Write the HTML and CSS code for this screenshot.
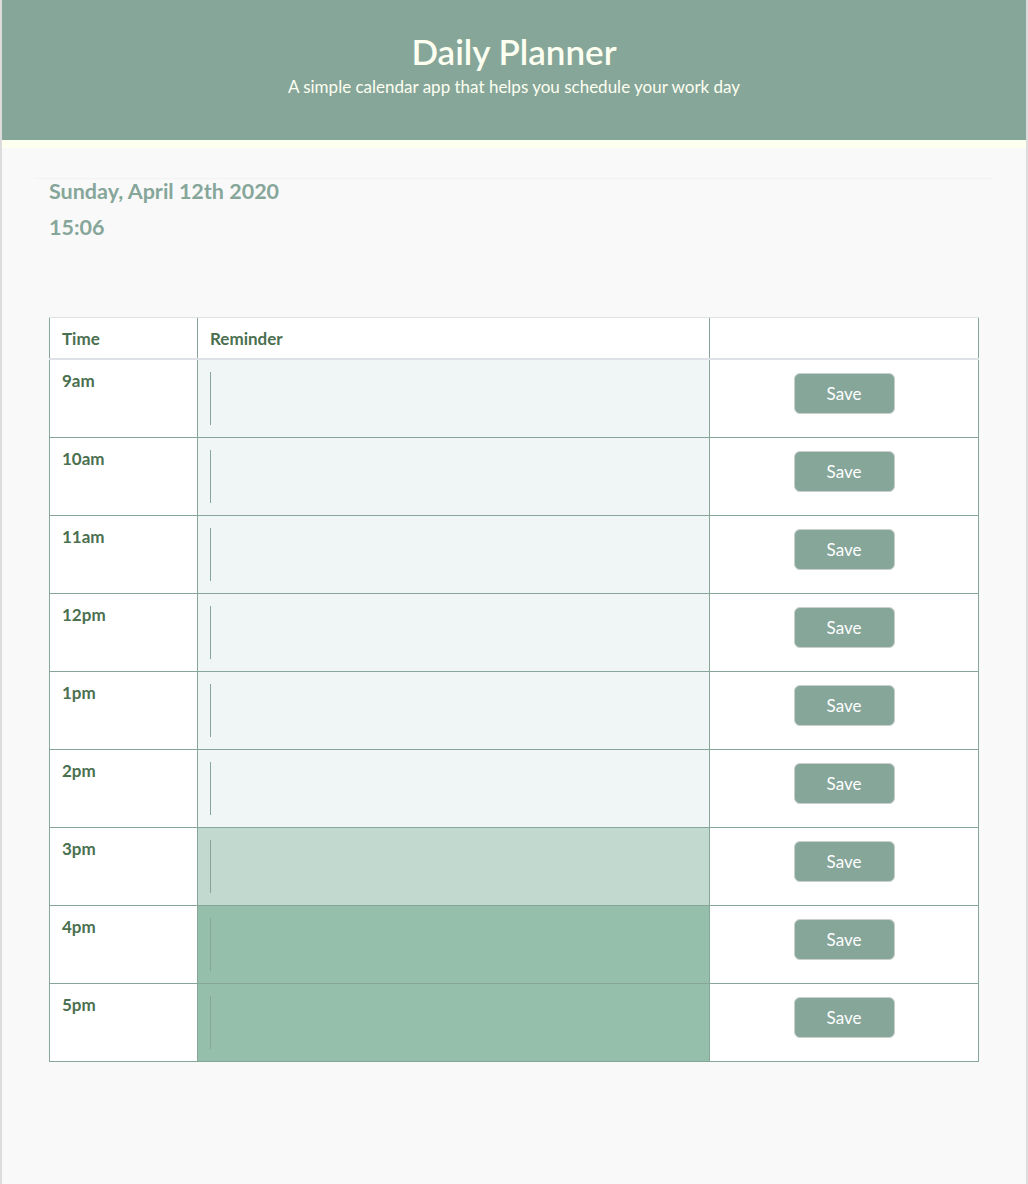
FILE: index.html
```html
<!DOCTYPE html>
<html lang="en">
<head>
<meta charset="utf-8">
<title>Daily Planner</title>
<link rel="stylesheet" href="styles.css">
</head>
<body>
<div class="page">
  <header class="jumbotron">
    <h1 class="title">Daily Planner</h1>
    <p class="lead">A simple calendar app that helps you schedule your work day</p>
  </header>
  <main class="container">
    <div class="today">
      <p class="date">Sunday, April 12th 2020</p>
      <p class="clock">15:06</p>
    </div>
    <table class="planner">
      <thead>
        <tr><th class="col-time">Time</th><th class="col-reminder">Reminder</th><th class="col-save"></th></tr>
      </thead>
      <tbody>
        <tr><td class="hour">9am</td><td class="slot past"><div class="note"></div></td><td class="action"><button class="save">Save</button></td></tr>
        <tr><td class="hour">10am</td><td class="slot past"><div class="note"></div></td><td class="action"><button class="save">Save</button></td></tr>
        <tr><td class="hour">11am</td><td class="slot past"><div class="note"></div></td><td class="action"><button class="save">Save</button></td></tr>
        <tr><td class="hour">12pm</td><td class="slot past"><div class="note"></div></td><td class="action"><button class="save">Save</button></td></tr>
        <tr><td class="hour">1pm</td><td class="slot past"><div class="note"></div></td><td class="action"><button class="save">Save</button></td></tr>
        <tr><td class="hour">2pm</td><td class="slot past"><div class="note"></div></td><td class="action"><button class="save">Save</button></td></tr>
        <tr><td class="hour">3pm</td><td class="slot present"><div class="note"></div></td><td class="action"><button class="save">Save</button></td></tr>
        <tr><td class="hour">4pm</td><td class="slot future"><div class="note"></div></td><td class="action"><button class="save">Save</button></td></tr>
        <tr><td class="hour">5pm</td><td class="slot future"><div class="note"></div></td><td class="action"><button class="save">Save</button></td></tr>
      </tbody>
    </table>
  </main>
</div>
</body>
</html>
```
FILE: styles.css
```css
html, body {
  margin: 0;
  padding: 0;
}
body {
  background: #f9f9f9;
  font-family: "Lato", "Open Sans", sans-serif;
  font-size: 17px;
  line-height: 1.5;
  color: #212529;
}
.page {
  min-height: 1184px;
  border-left: 2px solid #dcdcdc;
  border-right: 2px solid #dcdcdc;
  box-sizing: border-box;
}
.jumbotron {
  background: #86a69a;
  color: #fdfff0;
  text-align: center;
  box-sizing: content-box;
  height: 111px;
  padding-top: 29px;
  border-bottom: 8px solid #fdffef;
}
.title {
  margin: 0;
  font-size: 35px;
  font-weight: 600;
  line-height: 44px;
}
.lead {
  margin: 4px 0 0;
  font-size: 17px;
  line-height: 20px;
}
.container {
  width: 959px;
  margin: 30px 0 0 32px;
}
.today {
  border-top: 1px solid #f2f2f2;
  padding: 0 15px;
}
.date, .clock {
  margin: 0;
  color: #86a69a;
  font-weight: 700;
  font-size: 21.5px;
  line-height: 24px;
}
.clock {
  margin-top: 12px;
}
.planner {
  margin: 78px 15px 0;
  width: 930px;
  border-collapse: collapse;
  background: #fff;
  border-left: 1px solid #86a69a;
  border-right: 1px solid #86a69a;
  table-layout: fixed;
}
.planner th {
  text-align: left;
  color: #4b7050;
  font-weight: 700;
  padding: 8px 12px 6px;
  border-top: 1px solid #dee2e6;
  border-bottom: 2px solid #dee2e6;
  border-left: 1px solid #86a69a;
  height: 23px;
}
.col-time { width: 123px; }
.col-reminder { width: 487px; }
.planner td {
  border: 1px solid #86a69a;
  vertical-align: top;
  padding: 0;
}
.hour {
  color: #4b7050;
  font-weight: 700;
  padding: 8px 12px 0 !important;
}
.slot {
  padding: 12px !important;
}
.note {
  height: 53px;
  border-left: 1px solid #86a69a;
}
.past { background: #f0f6f5; }
.present { background: #c2d9cf; }
.future { background: #96bfab; }
.action {
  text-align: center;
}
.save {
  margin-top: 13px;
  width: 101px;
  height: 41px;
  background: #86a69a;
  color: #fff;
  border: 1px solid #c8cfcc;
  border-radius: 6px;
  font-family: inherit;
  font-size: 17px;
  cursor: pointer;
}
```
